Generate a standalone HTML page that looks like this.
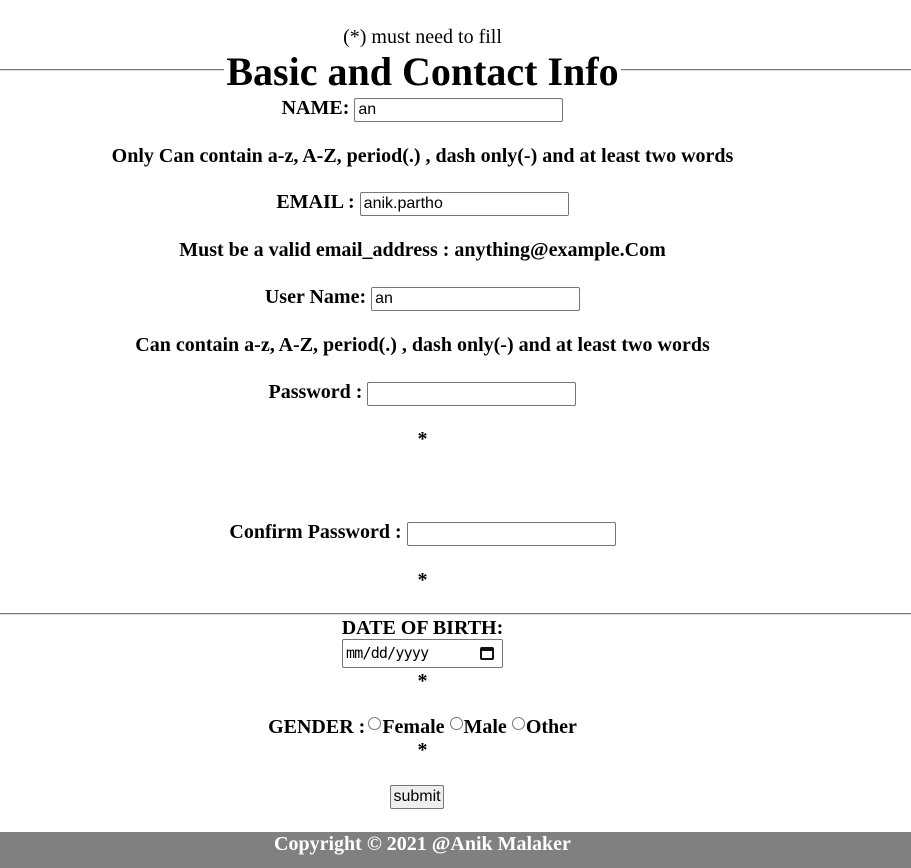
<!DOCTYPE html>
<html><head><style>
body{margin:0;width:911px;height:868px;position:relative;background:#fff;font-family:"Liberation Serif",serif;color:#000;overflow:hidden}
.l{position:absolute;left:0;width:845px;text-align:center;font-weight:bold;font-size:20px;line-height:22px;white-space:nowrap}
.in{display:inline-block;vertical-align:middle;width:204px;height:22px;border:1px solid #767676;border-radius:2px;font-family:"Liberation Sans",sans-serif;font-size:16px;font-weight:normal;text-align:left;line-height:22px;padding-left:3px;box-sizing:content-box;position:relative;top:1px}
.hr{position:absolute;left:0;width:911px;height:0;border-top:1px solid #7a7a7a;border-bottom:1px solid #ddd}
.r{display:inline-block;width:13px;height:13px;border:1px solid #767676;border-radius:50%;vertical-align:3px;margin:0 1px 0 3px;box-sizing:border-box}
</style></head><body>
<div class="l" style="top:26px;font-weight:normal">(*) must need to fill</div>
<div class="hr" style="top:69px"></div>
<div class="l" style="top:52px;font-size:40px;line-height:40px"><span style="background:#fff;padding:0 2px">Basic and Contact Info</span></div>
<div class="l" style="top:97px">NAME: <span class="in">an</span></div>
<div class="l" style="top:145px">Only Can contain a-z, A-Z, period(.) , dash only(-) and at least two words</div>
<div class="l" style="top:191px">EMAIL : <span class="in">anik.partho</span></div>
<div class="l" style="top:239px">Must be a valid email_address : anything@example.Com</div>
<div class="l" style="top:286px">User Name: <span class="in">an</span></div>
<div class="l" style="top:334px">Can contain a-z, A-Z, period(.) , dash only(-) and at least two words</div>
<div class="l" style="top:381px">Password : <span class="in"></span></div>
<div class="l" style="top:428px">*</div>
<div class="l" style="top:521px">Confirm Password : <span class="in"></span></div>
<div class="l" style="top:569px">*</div>
<div class="hr" style="top:613px"></div>
<div class="l" style="top:617px">DATE OF BIRTH:</div>
<div style="position:absolute;left:342px;top:639px;border:1px solid #767676;border-radius:2px;font-family:'DejaVu Sans Mono',monospace;font-size:15px;line-height:27px;padding-left:3px;box-sizing:border-box;width:161px;height:29px;letter-spacing:-0.8px">mm/dd/yyyy<span style="position:absolute;right:8px;top:7px;width:14px;height:13px;border:2px solid #111;border-top-width:4px;border-radius:2px;box-sizing:border-box"></span></div>
<div class="l" style="top:670px">*</div>
<div class="l" style="top:716px">GENDER :<span class="r"></span>Female <span class="r" style="margin-left:0"></span>Male <span class="r" style="margin-left:0"></span>Other</div>
<div class="l" style="top:739px">*</div>
<div style="position:absolute;left:390px;top:785px;width:54px;height:24px;border:1px solid #767676;border-radius:2px;background:#efefef;box-sizing:border-box;font-family:'Liberation Sans',sans-serif;font-size:16px;line-height:22px;text-align:center">submit</div>
<div style="position:absolute;left:0;top:832px;width:911px;height:36px;background:#808080"></div>
<div class="l" style="top:833px;color:#fff">Copyright © 2021 @Anik Malaker</div>
</body></html>
